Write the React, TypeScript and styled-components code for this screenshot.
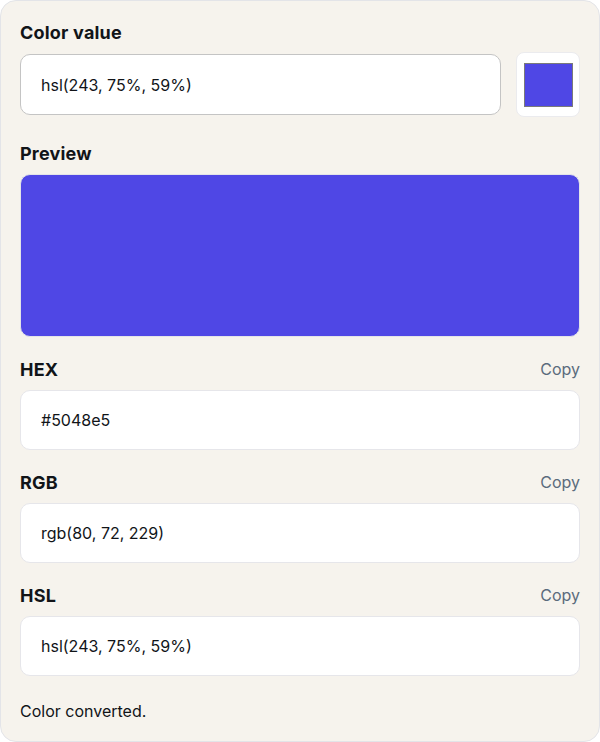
import React from 'react';
import styled, { createGlobalStyle } from 'styled-components';

const GlobalStyle = createGlobalStyle`
  html, body {
    margin: 0;
    padding: 0;
    background: #ffffff;
  }
  body {
    font-family: Inter, "Open Sans", sans-serif;
    color: #111418;
  }
`;

const Card = styled.div`
  box-sizing: border-box;
  width: 600px;
  height: 742px;
  padding: 19px 19px 0;
  background: #f6f3ed;
  border: 1px solid #e3e4e8;
  border-radius: 16px;
  display: flex;
  flex-direction: column;
`;

const Section = styled.section<{ $gap?: number }>`
  display: flex;
  flex-direction: column;
  margin-bottom: ${(p) => p.$gap ?? 20}px;
`;

const LabelRow = styled.div<{ $space?: number }>`
  display: flex;
  align-items: center;
  justify-content: space-between;
  height: 24px;
  margin-bottom: ${(p) => p.$space ?? 9}px;
`;

const Label = styled.div`
  font-size: 18px;
  font-weight: 700;
  letter-spacing: 0.2px;
`;

const CopyButton = styled.button`
  border: 0;
  background: none;
  padding: 0;
  font-family: inherit;
  font-size: 16px;
  color: #5b6b7c;
  cursor: pointer;
`;

const InputRow = styled.div`
  display: flex;
  align-items: center;
  gap: 15px;
`;

const Field = styled.div<{ $strong?: boolean }>`
  box-sizing: border-box;
  flex: ${(p) => (p.$strong ? '1' : 'none')};
  height: ${(p) => (p.$strong ? 61 : 60)}px;
  display: flex;
  align-items: center;
  padding: 0 20px;
  background: #ffffff;
  border: 1px solid ${(p) => (p.$strong ? '#c4c4c4' : '#e6e6ea')};
  border-radius: 10px;
  font-size: 16px;
  color: #111418;
`;

const SwatchBox = styled.div`
  box-sizing: border-box;
  width: 64px;
  height: 65px;
  display: flex;
  align-items: center;
  justify-content: center;
  background: #ffffff;
  border: 1px solid #ebebee;
  border-radius: 8px;
`;

const SwatchColor = styled.div<{ $color: string }>`
  box-sizing: border-box;
  width: 49px;
  height: 44px;
  background: ${(p) => p.$color};
  border: 1px solid #7a7a7a;
`;

const Preview = styled.div<{ $color: string }>`
  box-sizing: border-box;
  height: 163px;
  background: ${(p) => p.$color};
  border: 1px solid #e3e4e8;
  border-radius: 10px;
`;

const Status = styled.div`
  margin-top: 3px;
  font-size: 16px;
  line-height: 24px;
`;

const color = '#4f47e5';

const outputs = [
  { label: 'HEX', value: '#5048e5' },
  { label: 'RGB', value: 'rgb(80, 72, 229)' },
  { label: 'HSL', value: 'hsl(243, 75%, 59%)' },
];

export default function App() {
  return (
    <>
      <GlobalStyle />
      <Card>
        <Section $gap={24}>
          <LabelRow $space={8}>
            <Label>Color value</Label>
          </LabelRow>
          <InputRow>
            <Field $strong>hsl(243, 75%, 59%)</Field>
            <SwatchBox>
              <SwatchColor $color={color} />
            </SwatchBox>
          </InputRow>
        </Section>
        <Section>
          <LabelRow>
            <Label>Preview</Label>
          </LabelRow>
          <Preview $color={color} />
        </Section>
        {outputs.map((o) => (
          <Section key={o.label}>
            <LabelRow>
              <Label>{o.label}</Label>
              <CopyButton>Copy</CopyButton>
            </LabelRow>
            <Field>{o.value}</Field>
          </Section>
        ))}
        <Status>Color converted.</Status>
      </Card>
    </>
  );
}
